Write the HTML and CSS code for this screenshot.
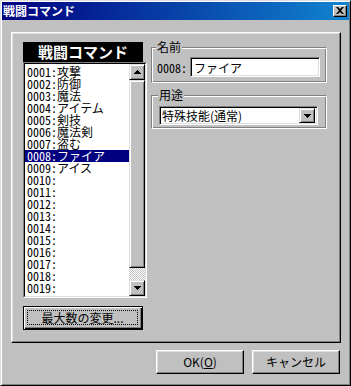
FILE: index.html
```html
<!DOCTYPE html>
<html lang="ja">

<head>
    <meta charset="UTF-8">
    <meta name="viewport" content="width=device-width, initial-scale=1.0">
    <title>戦闘コマンド</title>
    <link rel="stylesheet" href="styles.css">
</head>

<body>
    <!-- Dialog window -->
    <div class="window">
        <div class="titlebar">
            <span class="title">戦闘コマンド</span>
            <button class="close" title="閉じる">
                <svg width="8" height="7" viewBox="0 0 8 7"><path d="M0 0h2l2 2 2-2h2L5 3.5 8 7H6L4 5 2 7H0l3-3.5z" fill="#000"/></svg>
            </button>
        </div>

        <div class="client">
            <div class="panel">
                <!-- Command list -->
                <div class="left">
                    <div class="list-title">戦闘コマンド</div>
                    <div class="listbox">
                        <div class="listbox-inner">
                            <ul class="items">
                                <li><span class="num">0001:</span>攻撃</li>
                                <li><span class="num">0002:</span>防御</li>
                                <li><span class="num">0003:</span>魔法</li>
                                <li><span class="num">0004:</span>アイテム</li>
                                <li><span class="num">0005:</span>剣技</li>
                                <li><span class="num">0006:</span>魔法剣</li>
                                <li><span class="num">0007:</span>盗む</li>
                                <li class="selected"><span class="num">0008:</span>ファイア</li>
                                <li><span class="num">0009:</span>アイス</li>
                                <li><span class="num">0010:</span></li>
                                <li><span class="num">0011:</span></li>
                                <li><span class="num">0012:</span></li>
                                <li><span class="num">0013:</span></li>
                                <li><span class="num">0014:</span></li>
                                <li><span class="num">0015:</span></li>
                                <li><span class="num">0016:</span></li>
                                <li><span class="num">0017:</span></li>
                                <li><span class="num">0018:</span></li>
                                <li><span class="num">0019:</span></li>
                            </ul>
                            <div class="vscroll">
                                <div class="sb-btn">
                                    <svg width="7" height="4" viewBox="0 0 7 4"><path d="M3 0h1v1h1v1h1v1h1v1H0V3h1V2h1V1h1z" fill="#000"/></svg>
                                </div>
                                <div class="sb-thumb"></div>
                                <div class="sb-track"></div>
                                <div class="sb-btn">
                                    <svg width="7" height="4" viewBox="0 0 7 4"><path d="M0 0h7v1H6v1H5v1H4v1H3V3H2V2H1V1H0z" fill="#000"/></svg>
                                </div>
                            </div>
                        </div>
                    </div>
                    <button class="btn default"><span class="focus">最大数の変更...</span></button>
                </div>

                <!-- Properties -->
                <div class="right">
                    <fieldset class="group name-group">
                        <legend>名前</legend>
                        <div class="name-row">
                            <span class="num">0008:</span>
                            <div class="textbox">ファイア</div>
                        </div>
                    </fieldset>
                    <fieldset class="group use-group">
                        <legend>用途</legend>
                        <div class="combo">
                            <span class="combo-text">特殊技能(通常)</span>
                            <div class="combo-btn">
                                <svg width="7" height="4" viewBox="0 0 7 4"><path d="M0 0h7v1H6v1H5v1H4v1H3V3H2V2H1V1H0z" fill="#000"/></svg>
                            </div>
                        </div>
                    </fieldset>
                </div>
            </div>

            <div class="actions">
                <button class="btn action">OK(<u>O</u>)</button>
                <button class="btn action">キャンセル</button>
            </div>
        </div>
    </div>
</body>

</html>
```

FILE: styles.css
```css
/* General styling */
body {
    margin: 0;
    padding: 0;
    background-color: #c0c0c0;
    font-family: "Noto Sans CJK JP", sans-serif;
    font-size: 12px;
    color: #000;
}

button {
    font: inherit;
    color: inherit;
    margin: 0;
    padding: 0;
    background-color: #c0c0c0;
}

.num {
    font-feature-settings: "hwid";
}

/* Window frame */
.window {
    width: 351px;
    height: 386px;
    box-sizing: border-box;
    border: 1px solid;
    border-color: #dfdfdf #000 #000 #dfdfdf;
    box-shadow: inset 1px 1px #fff, inset -1px -1px #808080;
    padding: 1px;
    display: flex;
    flex-direction: column;
}

/* Title bar */
.titlebar {
    height: 18px;
    background: linear-gradient(to right, #000080, #1084d0);
    display: flex;
    align-items: center;
    justify-content: space-between;
    padding: 0 2px 0 1px;
}

.titlebar .title {
    color: #fff;
    font-weight: bold;
    line-height: 18px;
}

.close {
    width: 14px;
    height: 12px;
    box-sizing: border-box;
    border: 1px solid;
    border-color: #fff #000 #000 #fff;
    box-shadow: inset -1px -1px #808080;
    display: flex;
    align-items: center;
    justify-content: center;
    padding: 0 1px 1px 0;
}

.close svg {
    display: block;
}

/* Client area */
.client {
    flex: 1;
    display: flex;
    flex-direction: column;
    padding: 12px 0 0 9px;
}

.panel {
    width: 330px;
    height: 311px;
    box-sizing: border-box;
    border: 1px solid;
    border-color: #fff #000 #000 #fff;
    box-shadow: inset -1px -1px #808080, inset 1px 1px #dfdfdf;
    padding: 7px 0 0 11px;
    display: flex;
}

/* Left column: command list */
.left {
    width: 124px;
    margin-top: 2px;
    display: flex;
    flex-direction: column;
}

.list-title {
    width: 120px;
    height: 20px;
    background-color: #000;
    color: #fff;
    font-size: 15px;
    font-weight: bold;
    line-height: 20px;
    text-align: center;
}

.listbox {
    width: 124px;
    height: 236px;
    box-sizing: border-box;
    border: 1px solid;
    border-color: #808080 #fff #fff #808080;
}

.listbox-inner {
    height: 100%;
    box-sizing: border-box;
    border: 1px solid;
    border-color: #000 #dfdfdf #dfdfdf #000;
    background-color: #fff;
    display: flex;
}

.items {
    flex: 1;
    list-style: none;
    margin: 0;
    padding: 2px 0 0 0;
}

.items li {
    height: 12px;
    line-height: 12px;
    padding-left: 2px;
    white-space: nowrap;
}

.items li.selected {
    background-color: #000080;
    color: #fff;
}

/* Scrollbar */
.vscroll {
    width: 16px;
    display: flex;
    flex-direction: column;
}

.sb-btn,
.sb-thumb,
.combo-btn {
    box-sizing: border-box;
    background-color: #c0c0c0;
    border: 1px solid;
    border-color: #dfdfdf #000 #000 #dfdfdf;
    box-shadow: inset 1px 1px #fff, inset -1px -1px #808080;
}

.sb-btn {
    height: 16px;
    display: flex;
    align-items: center;
    justify-content: center;
}

.sb-btn svg,
.combo-btn svg {
    display: block;
}

.sb-thumb {
    height: 188px;
}

.sb-track {
    height: 12px;
    background: repeating-conic-gradient(#c0c0c0 0 25%, #fff 0 50%) 0 0 / 2px 2px;
}

/* Buttons */
.btn {
    box-sizing: border-box;
    border: 1px solid;
    border-color: #fff #000 #000 #fff;
    box-shadow: inset -1px -1px #808080, inset 1px 1px #dfdfdf;
    cursor: pointer;
}

.btn.default {
    width: 120px;
    height: 24px;
    margin-top: 8px;
    border-color: #000;
    box-shadow: inset 1px 1px #fff, inset -1px -1px #000, inset -2px -2px #808080;
    padding: 3px 4px 4px 3px;
}

.btn .focus {
    display: block;
    height: 100%;
    box-sizing: border-box;
    border: 1px dotted #000;
    line-height: 14px;
}

/* Right column: properties */
.right {
    width: 176px;
    margin-left: 4px;
    display: flex;
    flex-direction: column;
}

.group {
    margin: 0;
    min-width: 0;
    border: 1px solid;
    border-color: #808080 #fff #fff #808080;
    box-shadow: inset 1px 1px #fff, inset -1px -1px #808080;
}

.group legend {
    padding: 0 1px;
    margin-left: -1px;
    line-height: 14px;
    background-color: #c0c0c0;
}

.name-group {
    padding: 3px 6px 5px 5px;
}

.use-group {
    margin-top: 5px;
    padding: 4px 8px 3px 7px;
}

.name-row {
    display: flex;
    align-items: center;
    gap: 3px;
}

.textbox,
.combo {
    box-sizing: border-box;
    background-color: #fff;
    border: 1px solid;
    border-color: #808080 #fff #fff #808080;
    box-shadow: inset 1px 1px #000, inset -1px -1px #dfdfdf;
}

.textbox {
    flex: 1;
    height: 20px;
    line-height: 16px;
    padding: 2px 3px 0;
}

.combo {
    height: 19px;
    display: flex;
    align-items: center;
    padding: 2px;
}

.combo-text {
    flex: 1;
    line-height: 15px;
}

.combo-btn {
    width: 16px;
    height: 15px;
    display: flex;
    align-items: center;
    justify-content: center;
}

/* Dialog buttons */
.actions {
    display: flex;
    justify-content: flex-end;
    gap: 8px;
    margin-top: 7px;
    padding-right: 9px;
}

.btn.action {
    width: 88px;
    height: 24px;
    line-height: 20px;
}
```
